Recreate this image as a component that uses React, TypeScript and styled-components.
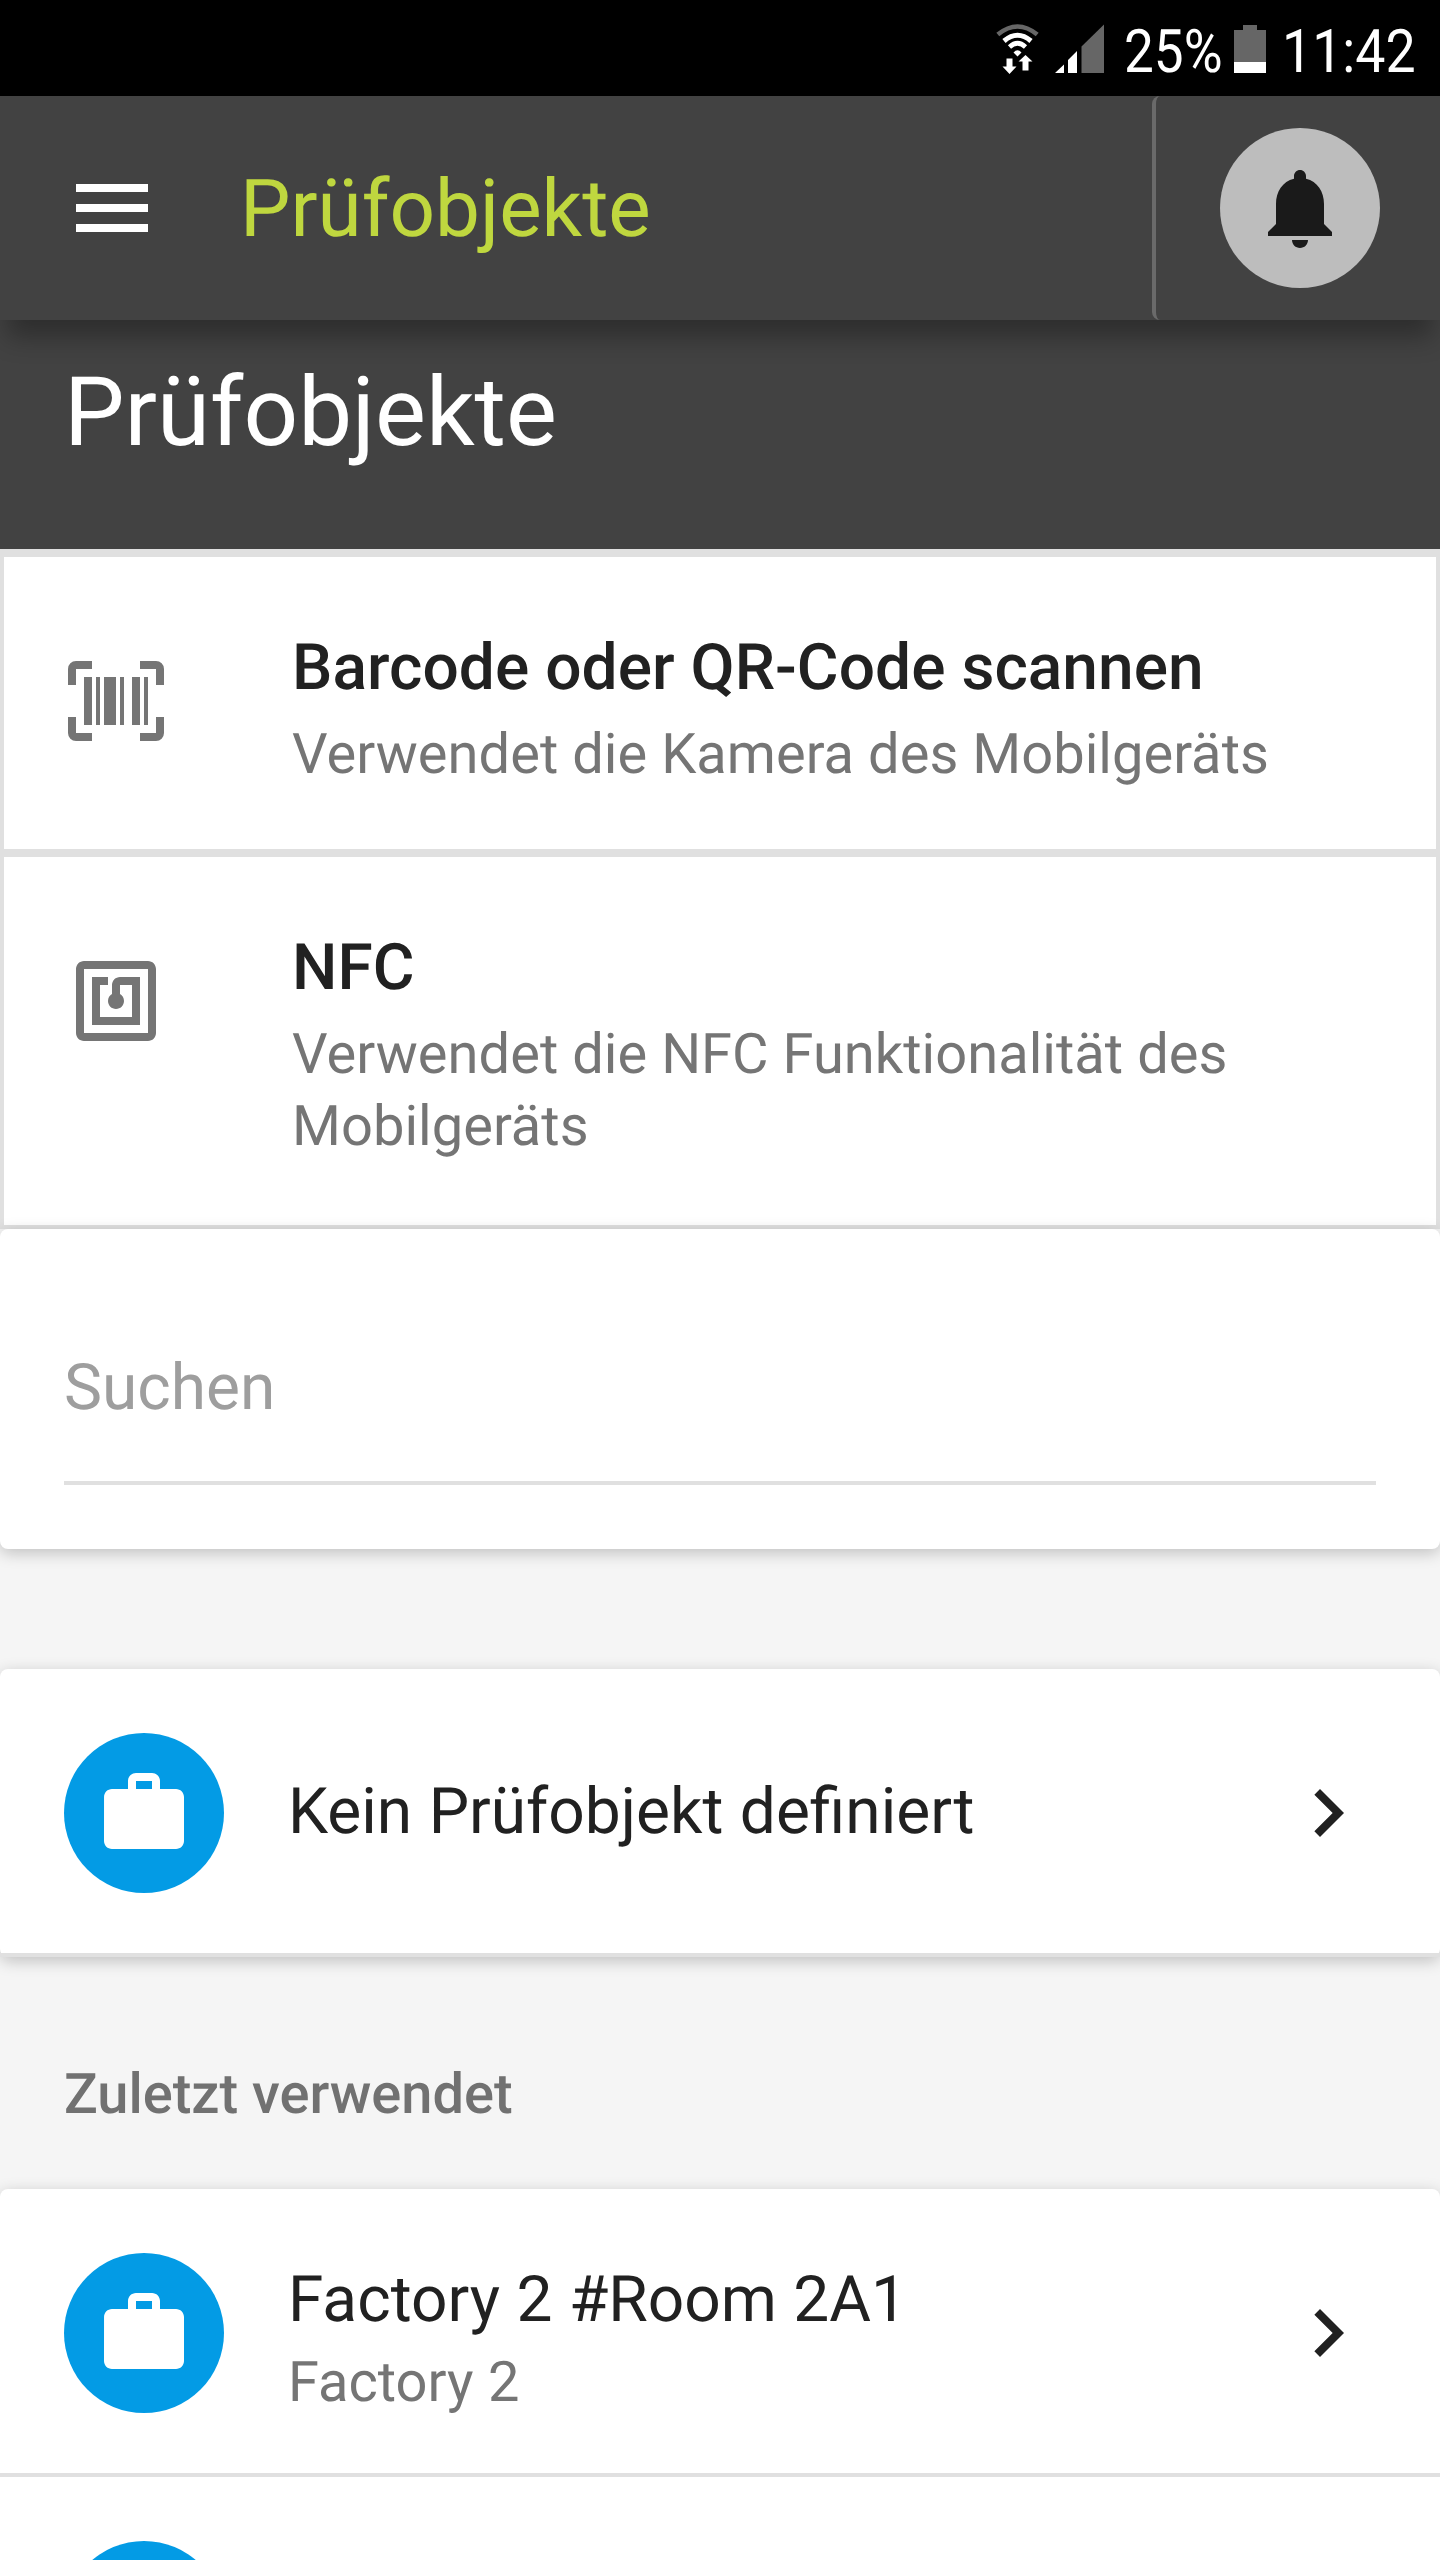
import React from "react";
import styled, { createGlobalStyle } from "styled-components";

const GlobalStyle = createGlobalStyle`
  * { box-sizing: border-box; }
  body {
    margin: 0;
    background: #f5f5f5;
    font-family: Roboto, "Liberation Sans", sans-serif;
    text-rendering: geometricPrecision;
  }
`;

const Screen = styled.main`
  display: flex;
  flex-direction: column;
  width: 1440px;
  height: 2560px;
  overflow: hidden;
  background: #f5f5f5;
`;

const StatusBar = styled.div`
  display: flex;
  flex: none;
  height: 96px;
  background: #000;
`;

const StatusIcons = styled.svg`
  flex: none;
  width: 116px;
  height: 96px;
  margin-left: 990px;
`;

const StatusText = styled.span<{ $width: number; $scale: number; $gap: number }>`
  flex: none;
  width: ${(p) => p.$width}px;
  margin-left: ${(p) => p.$gap}px;
  color: #fff;
  font-size: 60px;
  line-height: 70px;
  padding-top: 17px;
  white-space: nowrap;
  transform: scaleX(${(p) => p.$scale});
  transform-origin: left;
`;

const Battery = styled.svg`
  flex: none;
  width: 32px;
  height: 96px;
  margin-left: 16px;
`;

const AppBar = styled.header`
  display: flex;
  flex: none;
  align-items: center;
  height: 224px;
  padding-left: 64px;
  background: #424242;
  position: relative;
  z-index: 1;
  box-shadow: 0 24px 24px -7px rgba(0, 0, 0, 0.31);
`;

const AppTitle = styled.h1`
  flex: 1;
  margin: 0 0 0 80px;
  padding-top: 2px;
  color: #bfd73f;
  font-size: 80px;
  font-weight: 400;
  line-height: 94px;
`;

const Notifications = styled.div`
  display: flex;
  align-items: center;
  width: 288px;
  height: 224px;
  padding-left: 64px;
  border-left: 4px solid #6a6a6a;
  border-radius: 8px;
`;

const Round = styled.div<{ $color: string }>`
  display: flex;
  flex: none;
  align-items: center;
  justify-content: center;
  width: 160px;
  height: 160px;
  border-radius: 50%;
  background: ${(p) => p.$color};
`;

const Glyph = styled.svg`
  flex: none;
  display: block;
  width: 96px;
  height: 96px;
  fill: currentColor;
`;

const PageHead = styled.section`
  flex: none;
  height: 229px;
  padding: 37px 64px 0;
  background: #424242;
  color: #fff;
  font-size: 96px;
  line-height: 112px;
`;

const Options = styled.div`
  flex: none;
  height: 680px;
  border: 4px solid #e0e0e0;
  border-top-width: 0;
`;

const Option = styled.div<{ $height: number }>`
  display: flex;
  height: ${(p) => p.$height}px;
  padding: 96px 64px 0;
  border-top: 8px solid #e0e0e0;
  background: #fff;
  color: #757575;
`;

const OptionText = styled.div`
  margin: -23px 0 0 128px;
  letter-spacing: 0.04px;
`;

const OptionTitle = styled.div`
  color: #212121;
  font-size: 64px;
  font-weight: 500;
  line-height: 76px;
`;

const OptionDetail = styled.div`
  padding-top: 12px;
  font-size: 56px;
  line-height: 72px;
`;

const Card = styled.section<{ $gap: number }>`
  position: relative;
  flex: none;
  margin-top: ${(p) => p.$gap}px;
  border-radius: 8px;
  background: #fff;
  box-shadow: 0 4px 16px rgba(0, 0, 0, 0.22);
`;

const SearchCard = styled(Card)`
  height: 320px;
  padding: 0 64px;
`;

const SearchField = styled.div`
  height: 256px;
  padding-top: 121px;
  border-bottom: 4px solid #e0e0e0;
  color: #9e9e9e;
  font-size: 64px;
  line-height: 76px;
`;

const Row = styled.div`
  display: flex;
  align-items: center;
  height: 288px;
  padding: 4px 64px 0;
  border-bottom: 4px solid #e0e0e0;
  color: #212121;
`;

const RowText = styled.div<{ $shift: number }>`
  flex: 1;
  margin: ${(p) => p.$shift}px 0 0 64px;
  word-spacing: 0.6px;
`;

const RowTitle = styled.div`
  font-size: 64px;
  line-height: 76px;
`;

const RowDetail = styled.div`
  padding-top: 8px;
  color: #757575;
  font-size: 56px;
  line-height: 72px;
`;

const SectionLabel = styled.h2`
  flex: none;
  height: 232px;
  margin: 0;
  padding: 104px 64px 0;
  color: #717171;
  font-size: 56px;
  font-weight: 500;
  line-height: 66px;
`;

const icons = {
  menu: "M3 18h18v-2H3v2zm0-5h18v-2H3v2zm0-7v2h18V6H3z",
  bell: "M12 22c1.1 0 2-.9 2-2h-4c0 1.1.89 2 2 2zm6-6v-5c0-3.07-1.64-5.64-4.5-6.32V4c0-.83-.67-1.5-1.5-1.5s-1.5.67-1.5 1.5v.68C7.63 5.36 6 7.92 6 11v5l-2 2v1h16v-1l-2-2z",
  barcode:
    "M4,6H6V18H4V6M7,6H8V18H7V6M9,6H12V18H9V6M13,6H14V18H13V6M16,6H18V18H16V6M19,6H20V18H19V6M2,4V8H0V4A2,2 0 0,1 2,2H6V4H2M22,2A2,2 0 0,1 24,4V8H22V4H18V2H22M2,16V20H6V22H2A2,2 0 0,1 0,20V16H2M22,20V16H24V20A2,2 0 0,1 22,22H18V20H22Z",
  nfc: "M20 2H4c-1.1 0-2 .9-2 2v16c0 1.1.9 2 2 2h16c1.1 0 2-.9 2-2V4c0-1.1-.9-2-2-2zm0 18H4V4h16v16zM18 6h-5c-1.1 0-2 .9-2 2v2.28c-.6.35-1 .98-1 1.72 0 1.1.9 2 2 2s2-.9 2-2c0-.74-.4-1.38-1-1.72V8h3v8H8V8h2V6H6v12h12V6z",
  work: "M20 6h-4V4c0-1.11-.89-2-2-2h-4c-1.11 0-2 .89-2 2v2H4c-1.11 0-1.99.89-1.99 2L2 19c0 1.11.89 2 2 2h16c1.11 0 2-.89 2-2V8c0-1.11-.89-2-2-2zm-6 0h-4V4h4v2z",
  chevron: "M10 6L8.59 7.41 13.17 12l-4.58 4.59L10 18l6-6z",
};

const Icon = ({ name, color }: { name: keyof typeof icons; color?: string }) => (
  <Glyph viewBox="0 0 24 24" color={color}>
    <path d={icons[name]} />
  </Glyph>
);

const ObjectRow = ({ title, detail }: { title: string; detail?: string }) => (
  <Row>
    <Round $color="#039be5">
      <Icon name="work" color="#fff" />
    </Round>
    <RowText $shift={detail ? 14 : -2}>
      <RowTitle>{title}</RowTitle>
      {detail && <RowDetail>{detail}</RowDetail>}
    </RowText>
    <Icon name="chevron" />
  </Row>
);

export default function App() {
  return (
    <Screen>
      <GlobalStyle />
      <StatusBar>
        <StatusIcons viewBox="990 0 116 96">
          <g fill="none" strokeWidth="4.6">
            <path d="M997.800 34.500Q1017.500 18.500 1037.200 34.500" stroke="#666" />
            <path d="M1004 41Q1017.500 29.500 1031 41" stroke="#fff" strokeWidth="5" />
            <path d="M1009.500 47Q1017.500 39.500 1025.500 47" stroke="#fff" />
          </g>
          <path
            d="M1013.500 52.500Q1017.500 48 1021.500 52.500L1017.500 56.500zM1006.500 58.500h6v8h4l-7 7.500-7-7.500h4zM1022.500 70.500h6v-9h4l-7-6.500-7 6.500h4z"
            fill="#fff"
          />
          <path d="M1055 73l9-8.500V73zM1068 73V60l9-9v22z" fill="#fff" />
          <path d="M1081.500 73V46.500L1104 24.500V73z" fill="#666" />
        </StatusIcons>
        <StatusText $width={94} $scale={0.885} $gap={18}>25%</StatusText>
        <Battery viewBox="0 0 32 96">
          <path d="M9 25h14v5h9v43H0V30h9z" fill="#666" />
          <path d="M0 62h32v11H0z" fill="#fff" />
        </Battery>
        <StatusText $width={140} $scale={0.895} $gap={16}>11:42</StatusText>
      </StatusBar>
      <AppBar>
        <Icon name="menu" color="#fff" />
        <AppTitle>Prüfobjekte</AppTitle>
        <Notifications>
          <Round $color="#bdbdbd">
            <Icon name="bell" color="#1a1a1a" />
          </Round>
        </Notifications>
      </AppBar>
      <PageHead>Prüfobjekte</PageHead>
      <Options>
        <Option $height={300}>
          <Icon name="barcode" />
          <OptionText>
            <OptionTitle>Barcode oder QR-Code scannen</OptionTitle>
            <OptionDetail>Verwendet die Kamera des Mobilgeräts</OptionDetail>
          </OptionText>
        </Option>
        <Option $height={376}>
          <Icon name="nfc" />
          <OptionText>
            <OptionTitle>NFC</OptionTitle>
            <OptionDetail>Verwendet die NFC Funktionalität des Mobilgeräts</OptionDetail>
          </OptionText>
        </Option>
      </Options>
      <SearchCard $gap={0}>
        <SearchField>Suchen</SearchField>
      </SearchCard>
      <Card $gap={120}>
        <ObjectRow title="Kein Prüfobjekt definiert" />
      </Card>
      <SectionLabel>Zuletzt verwendet</SectionLabel>
      <Card $gap={0}>
        <ObjectRow title="Factory 2 #Room 2A1" detail="Factory 2" />
        <ObjectRow title="" />
      </Card>
    </Screen>
  );
}
